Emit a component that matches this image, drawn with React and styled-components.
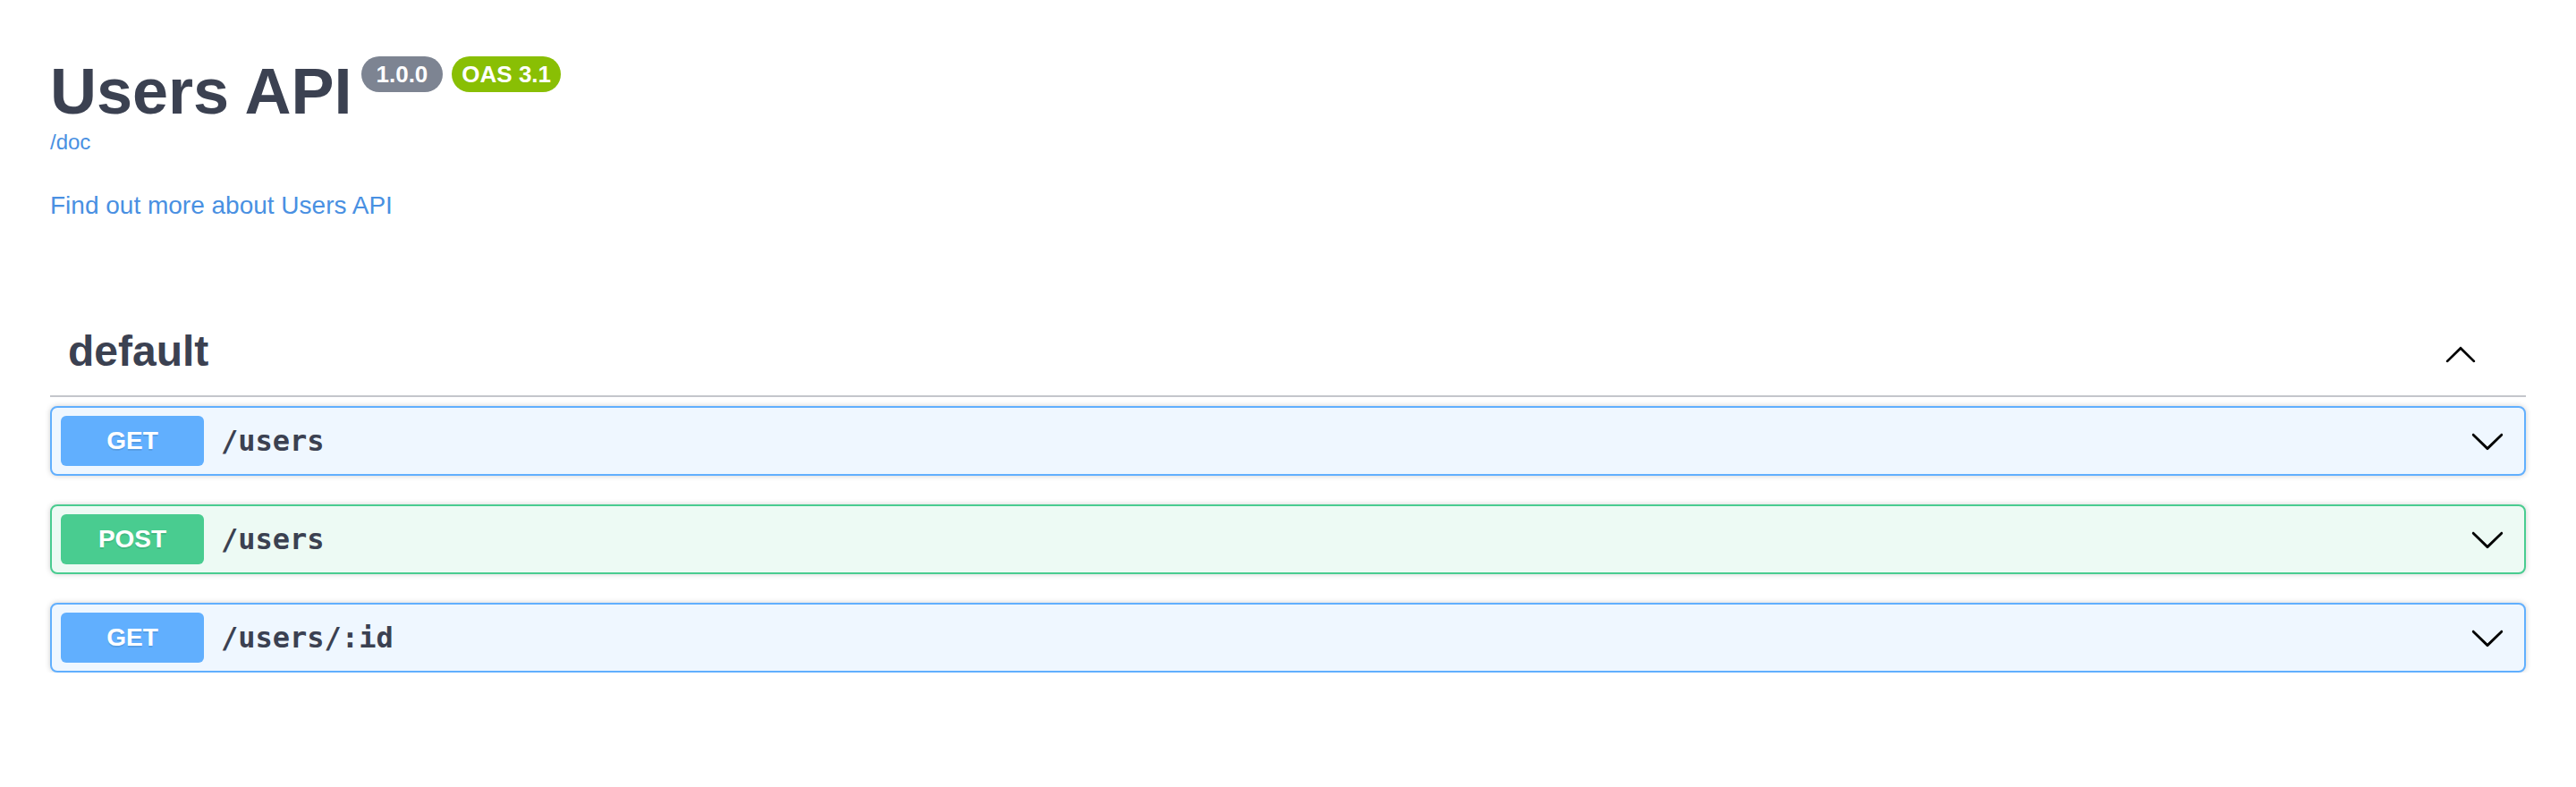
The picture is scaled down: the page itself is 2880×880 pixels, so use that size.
import React from "react";
import styled, { createGlobalStyle } from "styled-components";

const GlobalStyle = createGlobalStyle`
	html, body {
		margin: 0;
		padding: 0;
		background: #fff;
	}
	body {
		font-family: "Liberation Sans", Arial, sans-serif;
		color: #3b4151;
	}
`;

const Wrapper = styled.div`
	padding: 0 56px;
	box-sizing: border-box;
	width: 100%;
`;

const Info = styled.section`
	padding-top: 66px;
`;

const TitleRow = styled.div`
	display: flex;
	align-items: flex-start;
`;

const Title = styled.h2`
	margin: 0;
	font-size: 72px;
	line-height: 72px;
	font-weight: 700;
	color: #3b4151;
`;

const Badge = styled.span`
	display: inline-block;
	margin: -3px 0 0 10px;
	height: 40px;
	line-height: 40px;
	padding: 0 ${({ wide }) => (wide ? "17px" : "11px")};
	border-radius: 40px;
	background: ${({ color }) => color};
	color: #fff;
	font-size: 26px;
	font-weight: 700;
`;

const BaseUrl = styled.a`
	display: block;
	margin-top: 9px;
	font-size: 24px;
	line-height: 24px;
	color: #4990e2;
	text-decoration: none;
`;

const MoreLink = styled.a`
	display: block;
	margin-top: 45px;
	font-size: 28px;
	line-height: 28px;
	color: #4990e2;
	text-decoration: none;
`;

const Tag = styled.section`
	margin-top: 125px;
`;

const TagHeader = styled.div`
	display: flex;
	align-items: flex-start;
	justify-content: space-between;
	padding: 0 52px 25px 20px;
	border-bottom: 2px solid #c4c6cb;
`;

const TagName = styled.h3`
	margin: 0;
	font-size: 48px;
	line-height: 48px;
	font-weight: 700;
	color: #3b4151;
`;

const TagArrow = styled.svg`
	width: 40px;
	height: 40px;
	margin-top: 6px;
	fill: #000;
`;

const OpList = styled.div`
	display: flex;
	flex-direction: column;
	gap: 32px;
	padding-top: 10px;
`;

const methodColors = {
	GET: { main: "#61affe", bg: "#eff7ff" },
	POST: { main: "#49cc90", bg: "#edfaf4" },
};

const Opblock = styled.div`
	display: flex;
	align-items: center;
	height: 78px;
	box-sizing: border-box;
	padding: 0 21px 0 10px;
	border: 2px solid ${({ method }) => methodColors[method].main};
	background: ${({ method }) => methodColors[method].bg};
	border-radius: 8px;
	box-shadow: 0 0 6px rgba(0, 0, 0, 0.19);
`;

const Method = styled.span`
	flex: none;
	width: 160px;
	height: 56px;
	line-height: 56px;
	text-align: center;
	border-radius: 6px;
	background: ${({ method }) => methodColors[method].main};
	color: #fff;
	font-size: 28px;
	font-weight: 700;
	text-shadow: 0 2px 0 rgba(0, 0, 0, 0.1);
`;

const Path = styled.span`
	flex: 1;
	padding-left: 19px;
	font-family: "DejaVu Sans Mono", monospace;
	font-size: 32px;
	font-weight: 700;
	color: #3b4151;
`;

const Arrow = styled.svg`
	flex: none;
	width: 40px;
	height: 40px;
	fill: #000;
`;

const ARROW_DOWN =
	"M17.418 6.109c.272-.268.709-.268.979 0s.271.701 0 .969l-7.908 7.83c-.27.268-.707.268-.979 0l-7.908-7.83c-.27-.268-.27-.701 0-.969.271-.268.709-.268.979 0L10 13.25l7.418-7.141z";
const ARROW_UP =
	"M17.418 14.908c-.272.268-.709.268-.979 0l-6.94-6.83-6.94 6.83c-.272.268-.709.268-.979 0s-.272-.701 0-.969l7.43-7.315c.272-.268.709-.268.979 0l7.43 7.315c.27.268.27.701-.001.969z";

const operations = [
	{ method: "GET", path: "/users" },
	{ method: "POST", path: "/users" },
	{ method: "GET", path: "/users/:id" },
];

const App = () => (
	<>
		<GlobalStyle />
		<Wrapper>
			<Info>
				<TitleRow>
					<Title>Users API</Title>
					<Badge wide color="#7d8492">1.0.0</Badge>
					<Badge color="#89bf04">OAS 3.1</Badge>
				</TitleRow>
				<BaseUrl href="#">/doc</BaseUrl>
				<MoreLink href="#">Find out more about Users API</MoreLink>
			</Info>
			<Tag>
				<TagHeader>
					<TagName>default</TagName>
					<TagArrow viewBox="0 0 20 20">
						<path d={ARROW_UP} />
					</TagArrow>
				</TagHeader>
				<OpList>
					{operations.map((op, i) => (
						<Opblock key={i} method={op.method}>
							<Method method={op.method}>{op.method}</Method>
							<Path>{op.path}</Path>
							<Arrow viewBox="0 0 20 20">
								<path d={ARROW_DOWN} />
							</Arrow>
						</Opblock>
					))}
				</OpList>
			</Tag>
		</Wrapper>
	</>
);

export default App;
